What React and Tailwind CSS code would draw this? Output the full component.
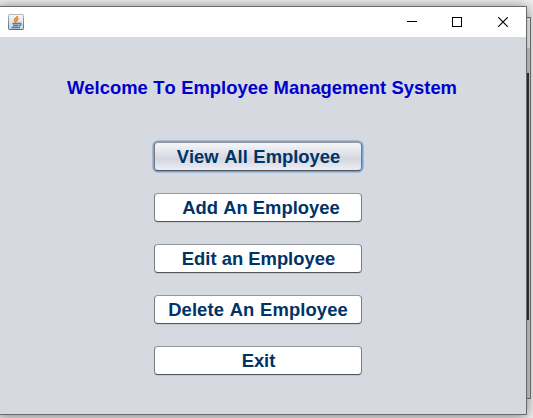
const buttons = [
  { label: 'View All Employee', cls: 'pl-[1px] [word-spacing:0.5px]', focused: true },
  { label: 'Add An Employee', cls: 'pl-[6px]' },
  { label: 'Edit an Employee', cls: 'pl-[1px]' },
  { label: 'Delete An Employee', cls: 'tracking-[0.1px] [word-spacing:0.5px]' },
  { label: 'Exit', cls: 'pl-[1px] tracking-[-0.1px]' },
];

function JavaIcon() {
  return (
    <svg width="16" height="16" viewBox="0 0 16 16" className="ml-2 shrink-0">
      <defs>
        <linearGradient id="tile" x1="0" y1="0" x2="0" y2="1">
          <stop offset="0" stopColor="#f7f8f9" />
          <stop offset="1" stopColor="#c9d3dc" />
        </linearGradient>
        <linearGradient id="edge" x1="0" y1="0" x2="0" y2="1">
          <stop offset="0" stopColor="#a9b8c4" />
          <stop offset="1" stopColor="#4d6d88" />
        </linearGradient>
      </defs>
      <rect x="0.5" y="0.5" width="15" height="15" rx="0.8" fill="url(#tile)" stroke="url(#edge)" />
      <path d="M9.500 2C9.500 4 6 4.500 6.500 6.500L8 8.500M10.500 4.500C8 5.500 8.500 6 9 7.500" fill="none" stroke="#f07a18" strokeWidth="1.6" />
      <path d="M4.500 9.500H11M5 11.500H10.500M11 9.300C14 8.700 13.500 11.300 11 11.500M3.500 13.500H12" fill="none" stroke="#4c7da5" strokeWidth="1.3" />
    </svg>
  );
}

function WindowControls() {
  return (
    <div className="ml-auto flex h-full text-black">
      <div className="flex w-[45px] items-center justify-center">
        <svg width="10" height="10" viewBox="0 0 10 10" shapeRendering="crispEdges"><path d="M0 4.500H10" stroke="currentColor" /></svg>
      </div>
      <div className="flex w-[46px] items-center justify-center">
        <svg width="10" height="10" viewBox="0 0 10 10" shapeRendering="crispEdges"><rect x="0.5" y="0.5" width="9" height="9" fill="none" stroke="currentColor" /></svg>
      </div>
      <div className="flex w-[46px] items-center justify-center">
        <svg width="10" height="10" viewBox="0 0 10 10"><path d="M0.200 0.200L9.800 9.800M9.800 0.200L0.200 9.800" stroke="currentColor" strokeWidth="1.15" /></svg>
      </div>
    </div>
  );
}

function MenuButton({ label, cls, focused }) {
  const skin = focused
    ? 'bg-linear-to-b from-[#f5f6f8] via-[#d3d7df] via-60% to-[#eceff4] shadow-[0_0_0_1.5px_#73a4d1]'
    : 'bg-white shadow-[0_1px_0_#c5c8cf]';
  return (
    <button className={`flex h-[29px] w-[208px] items-center justify-center rounded-[4px] border border-x-[#777b82] border-t-[#93979e] border-b-[#51555c] text-[18.4px] leading-[20px] font-bold whitespace-nowrap text-[#003366] ${skin}`}>
      <span className={cls}>{label}</span>
    </button>
  );
}

export default function App() {
  return (
    <div className="relative h-[418px] w-[533px] overflow-hidden bg-[#f0f0f0] font-['Liberation_Sans',Arial,sans-serif] [font-kerning:none]">
      <div className="absolute top-[17px] left-[400px] h-[382px] w-[131px] border border-[#777777] bg-[#d6d9df]">
        <div className="h-[30px] bg-white" />
        <div className="mt-[25px] ml-auto h-[247px] w-[3px] border-l-2 border-[#34363a]" />
      </div>
      <div className="absolute top-[6px] -left-[3px] flex h-[409px] w-[530px] flex-col border border-[#6b6b6b] bg-[#d6d9e0] pl-[2px] shadow-[0_1px_12px_rgba(0,0,0,0.5)]">
        <div className="-ml-[2px] flex h-[30px] shrink-0 items-center bg-white pr-0 pl-[2px]">
          <JavaIcon />
          <WindowControls />
        </div>
        <h1 className="mt-[41px] ml-[67px] h-5 text-[18.4px] leading-5 font-bold [word-spacing:0.4px] whitespace-nowrap text-[#0000cc]">
          Welcome To Employee Management System
        </h1>
        <div className="mt-[44px] ml-[154px] flex flex-col gap-[22px]">
          {buttons.map((b) => <MenuButton key={b.label} {...b} />)}
        </div>
      </div>
    </div>
  );
}
